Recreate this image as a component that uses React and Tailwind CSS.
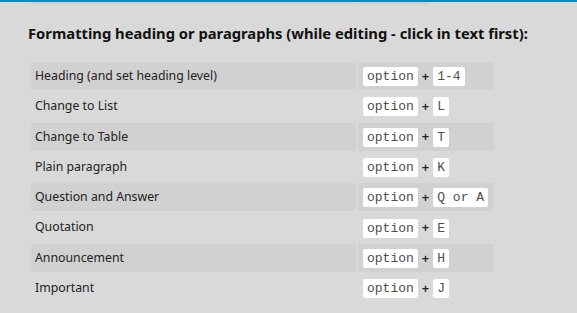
const rows = [
  { label: 'Heading (and set heading level)', key: '1-4' },
  { label: 'Change to List', key: 'L' },
  { label: 'Change to Table', key: 'T' },
  { label: 'Plain paragraph', key: 'K' },
  { label: 'Question and Answer', key: 'Q or A' },
  { label: 'Quotation', key: 'E' },
  { label: 'Announcement', key: 'H' },
  { label: 'Important', key: 'J' },
];

function Key({ children }) {
  return (
    <kbd className="inline-block h-[19px] px-[4px] rounded-[2px] bg-white text-[13px] leading-[19px] text-[#4d4d4d] font-['Liberation_Mono',monospace] align-middle">
      {children}
    </kbd>
  );
}

export default function App() {
  return (
    <div className="w-[577px] h-[313px] overflow-hidden bg-[#d9d9d9] border-t-2 border-[#0b8bc6] font-['Noto_Sans',sans-serif]">
      {/* tail of the previous shortcut table */}
      <div className="flex gap-[2px] pl-[31px]">
        <div className="w-[325px] h-[3px] bg-[#d1d1d1]" />
        <div className="w-[72px] h-[3px] bg-[#d1d1d1]" />
      </div>

      <div className="pl-[29px] pt-[17px]">
        <h3 className="text-[14.75px] leading-[22px] font-bold text-[#111] -ml-[1px]">
          Formatting heading or paragraphs (while editing - click in text first):
        </h3>

        <table className="mt-[16px] border-separate border-spacing-[2px] text-[12.3px] text-[#222]">
          <tbody>
            {rows.map((row, i) => {
              const stripe = i % 2 === 0 ? 'bg-[#d1d1d1]' : '';
              return (
                <tr key={row.label}>
                  <td className={`w-[325px] h-[28.3px] p-0 pl-[4px] rounded-[2px] ${stripe}`}>{row.label}</td>
                  <td className={`w-[136px] h-[28.3px] p-0 pl-[5px] rounded-[2px] ${stripe}`}>
                    <div className="flex items-center pt-[1px]">
                      <Key>option</Key>
                      <span className="mx-[4px] text-[13px] font-semibold text-[#222]">+</span>
                      <Key>{row.key}</Key>
                    </div>
                  </td>
                </tr>
              );
            })}
          </tbody>
        </table>
      </div>
    </div>
  );
}
